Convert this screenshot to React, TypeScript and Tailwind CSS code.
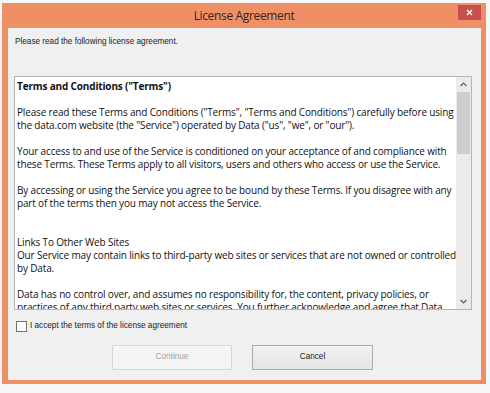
import React from "react";

const bodyFont = { fontFamily: '"Open Sans", "Noto Sans", sans-serif' };
const smallFont = { fontFamily: '"Liberation Sans", Arial, sans-serif' };

const lines: { t: string; b?: boolean }[] = [
  { t: 'Terms and Conditions ("Terms")', b: true },
  { t: "" },
  { t: 'Please read these Terms and Conditions ("Terms", "Terms and Conditions") carefully before using' },
  { t: 'the data.com website (the "Service") operated by Data ("us", "we", or "our").' },
  { t: "" },
  { t: "Your access to and use of the Service is conditioned on your acceptance of and compliance with" },
  { t: "these Terms. These Terms apply to all visitors, users and others who access or use the Service." },
  { t: "" },
  { t: "By accessing or using the Service you agree to be bound by these Terms. If you disagree with any" },
  { t: "part of the terms then you may not access the Service." },
  { t: "" },
  { t: "" },
  { t: "Links To Other Web Sites" },
  { t: "Our Service may contain links to third-party web sites or services that are not owned or controlled" },
  { t: "by Data." },
  { t: "" },
  { t: "Data has no control over, and assumes no responsibility for, the content, privacy policies, or" },
  { t: "practices of any third party web sites or services. You further acknowledge and agree that Data" },
];

export default function App() {
  return (
    <div className="w-[490px] h-[393px] bg-[#f7f7f7] overflow-hidden">
      <div className="ml-[2px] mt-[3px] w-[484px] h-[381px] bg-[#ee8f66] flex flex-col">
        {/* Title bar */}
        <div className="relative h-[25px] flex items-center justify-center pt-[1px]">
          <span
            className="text-[12px] text-[#3b2418] tracking-[-0.35px]"
            style={bodyFont}
          >
            License Agreement
          </span>
          <div className="absolute right-[5px] top-[2px] w-[23px] h-[15px] bg-[#c94f4c] flex items-center justify-center">
            <svg width="7" height="7" viewBox="0 0 7 7">
              <path d="M1 1 L6 6 M6 1 L1 6" stroke="#ffffff" strokeWidth="1.4" />
            </svg>
          </div>
        </div>
        {/* Content */}
        <div className="ml-[6px] mr-[5px] mb-[4px] flex-1 bg-[#f0f0f0] flex flex-col">
          <div
            className="pl-[7px] pt-[9px] h-[48px] text-[8.2px] text-[#1a1a1a] leading-[10px]"
            style={smallFont}
          >
            Please read the following license agreement.
          </div>
          <div className="ml-[6px] w-[458px] h-[234px] bg-white border border-[#b5b5b5] flex overflow-hidden">
            <div
              className="flex-1 pl-[2px] pt-[3px] text-[10px] leading-[13px] text-[#111] tracking-[-0.16px] overflow-hidden"
              style={bodyFont}
            >
              {lines.map((l, i) => (
                <div
                  key={i}
                  className={`h-[13px] whitespace-nowrap ${l.b ? "font-bold" : ""}`}
                >
                  {l.t}
                </div>
              ))}
            </div>
            <div className="w-[15px] bg-[#ebebeb] flex flex-col items-center">
              <div className="h-[15px] flex items-center justify-center">
                <svg width="7" height="5" viewBox="0 0 7 5">
                  <path d="M0.5 4 L3.5 1 L6.5 4" stroke="#606060" strokeWidth="1.2" fill="none" />
                </svg>
              </div>
              <div className="w-[13px] h-[62px] bg-[#cdcdcd]" />
              <div className="flex-1" />
              <div className="h-[15px] flex items-center justify-center">
                <svg width="7" height="5" viewBox="0 0 7 5">
                  <path d="M0.5 1 L3.5 4 L6.5 1" stroke="#606060" strokeWidth="1.2" fill="none" />
                </svg>
              </div>
            </div>
          </div>
          <div className="mt-[10px] ml-[8px] flex items-center h-[12px]">
            <div className="w-[11px] h-[11px] border border-[#6f6f6f] bg-white" />
            <span
              className="ml-[3px] text-[8.2px] text-[#1a1a1a]"
              style={smallFont}
            >
              I accept the terms of the license agreement
            </span>
          </div>
          <div className="mt-[13px] ml-[104px] flex gap-[20px]">
            <div
              className="w-[120px] h-[25px] border border-[#d6d6d6] bg-[#f4f4f4] flex items-center justify-center text-[8.2px] text-[#a3a3a3]"
              style={smallFont}
            >
              Continue
            </div>
            <div
              className="w-[121px] h-[25px] border border-[#acacac] bg-gradient-to-b from-[#f2f2f2] to-[#e3e3e3] flex items-center justify-center text-[8.2px] text-[#1a1a1a]"
              style={smallFont}
            >
              Cancel
            </div>
          </div>
        </div>
      </div>
    </div>
  );
}
